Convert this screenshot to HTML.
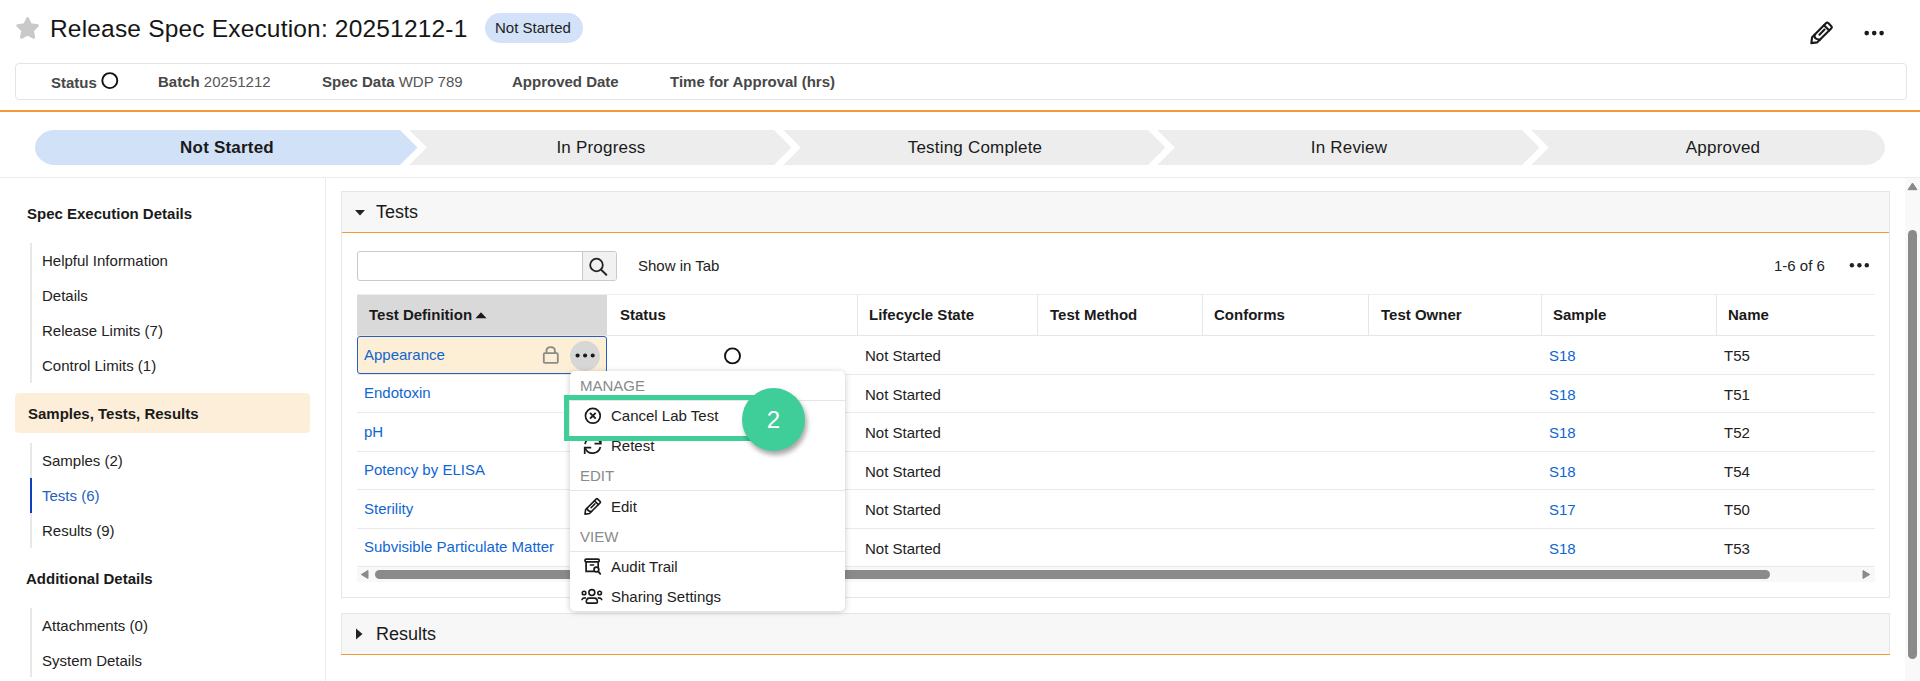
<!DOCTYPE html>
<html><head><meta charset="utf-8">
<style>
html,body{margin:0;padding:0;background:#fff;width:1920px;height:681px;overflow:hidden;position:relative;font-family:"Liberation Sans",sans-serif;}
.a{position:absolute;}
.t{position:absolute;white-space:nowrap;line-height:1;font-size:15px;color:#222;}
.b{font-weight:bold;}
.lnk{color:#0f66d2;}
svg{position:absolute;overflow:visible;}
</style></head><body>

<!-- ===== HEADER ===== -->
<svg style="left:0;top:0" width="60" height="50" viewBox="0 0 60 50"><path d="M27.60 18.30 L30.72 24.61 L37.68 25.62 L32.64 30.54 L33.83 37.48 L27.60 34.20 L21.37 37.48 L22.56 30.54 L17.52 25.62 L24.48 24.61 Z" fill="#c9c9c9" stroke="#c9c9c9" stroke-width="2.6" stroke-linejoin="round"/></svg>
<div class="t" style="left:50px;top:17px;font-size:24.5px;letter-spacing:0.18px;color:#161616;">Release Spec Execution: 20251212-1</div>
<div class="a" style="left:485px;top:13px;width:98px;height:30px;border-radius:15px;background:#d3e2f8;"></div>
<div class="t" style="left:495px;top:20px;color:#222;">Not Started</div>

<!-- pencil -->
<svg style="left:1802.1px;top:15.1px" width="32" height="32" viewBox="0 0 24 24"><g fill="none" stroke="#1a1a1a" stroke-width="1.6" stroke-linejoin="round" stroke-linecap="round"><path d="M7.00 21.10 L7.60 16.61 L18.14 6.07 Q18.91 5.30 19.69 6.07 L22.03 8.41 Q22.80 9.19 22.03 9.96 L11.49 20.50 Z"/><path d="M16.51 7.70 L20.40 11.59"/><path d="M13.08 14.74 L16.90 10.92"/><path d="M9.44 14.77 Q9.05 16.93 10.54 17.71 Q12.09 18.55 13.54 18.45"/></g></svg>
<!-- ellipsis -->
<svg style="left:1860px;top:28px" width="28" height="10" viewBox="0 0 28 10">
  <circle cx="6.7" cy="5.1" r="2.3" fill="#1a1a1a"/><circle cx="14.2" cy="5.1" r="2.3" fill="#1a1a1a"/><circle cx="21.6" cy="5.1" r="2.3" fill="#1a1a1a"/>
</svg>

<!-- ===== INFO BAR ===== -->
<div class="a" style="left:15px;top:63px;width:1890px;height:35px;border:1px solid #e4e4e4;border-radius:4px;"></div>
<div class="t b" style="left:51px;top:75px;color:#474747;">Status</div>
<svg style="left:101px;top:72px" width="18" height="18" viewBox="0 0 18 18"><circle cx="8.8" cy="8.6" r="7.5" fill="none" stroke="#111" stroke-width="1.9"/></svg>
<div class="t" style="left:158px;top:74px;color:#555;"><span class="b" style="color:#474747">Batch</span> 20251212</div>
<div class="t" style="left:322px;top:74px;color:#555;"><span class="b" style="color:#474747">Spec Data</span> WDP 789</div>
<div class="t b" style="left:512px;top:74px;color:#474747;">Approved Date</div>
<div class="t b" style="left:670px;top:74px;color:#474747;">Time for Approval (hrs)</div>

<div class="a" style="left:0;top:110px;width:1920px;height:2px;background:#f39a36;"></div>

<!-- ===== STAGE PATH ===== -->
<svg style="left:0;top:130px" width="1920" height="35" viewBox="0 130 1920 35">
  <path d="M55 130 L400 130 L417.5 147.5 L400 165 L55 165 A20 17.5 0 0 1 35 147.5 A20 17.5 0 0 1 55 130 Z" fill="#d1e1f8"/>
  <path d="M409.3 130 L774 130 L791.5 147.5 L774 165 L409.3 165 L426.8 147.5 Z" fill="#ededed"/>
  <path d="M783.3 130 L1148 130 L1165.5 147.5 L1148 165 L783.3 165 L800.8 147.5 Z" fill="#ededed"/>
  <path d="M1157.3 130 L1522 130 L1539.5 147.5 L1522 165 L1157.3 165 L1174.8 147.5 Z" fill="#ededed"/>
  <path d="M1531.3 130 L1865 130 A20 17.5 0 0 1 1885 147.5 A20 17.5 0 0 1 1865 165 L1531.3 165 L1548.8 147.5 Z" fill="#ededed"/>
</svg>
<div class="t b" style="left:35px;width:384px;text-align:center;top:139px;font-size:17px;letter-spacing:0.2px;color:#1a1a1a;">Not Started</div>
<div class="t" style="left:409px;width:384px;text-align:center;top:139px;font-size:17px;letter-spacing:0.2px;color:#1a1a1a;">In Progress</div>
<div class="t" style="left:783px;width:384px;text-align:center;top:139px;font-size:17px;letter-spacing:0.2px;color:#1a1a1a;">Testing Complete</div>
<div class="t" style="left:1157px;width:384px;text-align:center;top:139px;font-size:17px;letter-spacing:0.2px;color:#1a1a1a;">In Review</div>
<div class="t" style="left:1531px;width:384px;text-align:center;top:139px;font-size:17px;letter-spacing:0.2px;color:#1a1a1a;">Approved</div>

<div class="a" style="left:0;top:177px;width:1920px;height:1px;background:#ebebeb;"></div>

<!-- ===== SIDEBAR ===== -->
<div class="a" style="left:325px;top:178px;width:1px;height:503px;background:#ececec;"></div>
<div class="t b" style="left:27px;top:206px;color:#1a1a1a;">Spec Execution Details</div>
<div class="a" style="left:30px;top:243px;width:2px;height:140px;background:#e8e8e8;"></div>
<div class="t" style="left:42px;top:253px;">Helpful Information</div>
<div class="t" style="left:42px;top:288px;">Details</div>
<div class="t" style="left:42px;top:323px;">Release Limits (7)</div>
<div class="t" style="left:42px;top:358px;">Control Limits (1)</div>

<div class="a" style="left:15px;top:393px;width:295px;height:40px;border-radius:4px;background:#fdeed9;"></div>
<div class="t b" style="left:28px;top:406px;color:#1a1a1a;">Samples, Tests, Results</div>
<div class="a" style="left:30px;top:443px;width:2px;height:105px;background:#e8e8e8;"></div>
<div class="a" style="left:30px;top:478px;width:2px;height:35px;background:#0d3fbf;"></div>
<div class="t" style="left:42px;top:453px;">Samples (2)</div>
<div class="t" style="left:42px;top:488px;color:#2461c2;">Tests (6)</div>
<div class="t" style="left:42px;top:523px;">Results (9)</div>

<div class="t b" style="left:26px;top:571px;color:#1a1a1a;">Additional Details</div>
<div class="a" style="left:30px;top:608px;width:2px;height:69px;background:#e8e8e8;"></div>
<div class="t" style="left:42px;top:618px;">Attachments (0)</div>
<div class="t" style="left:42px;top:653px;">System Details</div>

<!-- page scrollbar -->
<div class="a" style="left:1905px;top:178px;width:15px;height:503px;background:#f9f9f9;"></div>
<svg style="left:1907px;top:182px" width="11" height="9" viewBox="0 0 11 9"><path d="M5.5 1 L10 7.7 L1 7.7 Z" fill="#8a8a8a" stroke="#8a8a8a" stroke-width="1" stroke-linejoin="round"/></svg>
<div class="a" style="left:1908px;top:230px;width:9px;height:429px;border-radius:4.5px;background:#8a8a8a;"></div>
<!-- ===== TESTS PANEL ===== -->
<div class="a" style="left:341px;top:191px;width:1547px;height:405px;border:1px solid #e6e6e6;"></div>
<div class="a" style="left:342px;top:192px;width:1547px;height:40px;background:#f7f7f7;"></div>
<div class="a" style="left:342px;top:232px;width:1547px;height:1px;background:#f29a35;"></div>
<svg style="left:354px;top:209px" width="12" height="8" viewBox="0 0 12 8"><path d="M1 1 L11 1 L6 6.5 Z" fill="#222"/></svg>
<div class="t" style="left:376px;top:203px;font-size:18px;color:#1a1a1a;">Tests</div>

<!-- search -->
<div class="a" style="left:357px;top:251px;width:258px;height:28px;border:1px solid #c9c9c9;border-radius:3px;background:#fff;"></div>
<div class="a" style="left:582px;top:252px;width:33px;height:28px;border-left:1px solid #c9c9c9;background:#f1f1f1;border-radius:0 2px 2px 0;"></div>
<svg style="left:586px;top:255px" width="24" height="24" viewBox="0 0 24 24"><circle cx="10.5" cy="10" r="6.3" fill="none" stroke="#222" stroke-width="1.8"/><path d="M15 14.6 L20.3 19.8" stroke="#222" stroke-width="2" stroke-linecap="round"/></svg>
<div class="t" style="left:638px;top:258px;">Show in Tab</div>
<div class="t" style="left:1774px;top:258px;">1-6 of 6</div>
<svg style="left:1846px;top:260px" width="26" height="10" viewBox="0 0 26 10"><circle cx="5.9" cy="5.3" r="2.2" fill="#222"/><circle cx="13.4" cy="5.3" r="2.2" fill="#222"/><circle cx="20.8" cy="5.3" r="2.2" fill="#222"/></svg>

<!-- table header -->
<div class="a" style="left:357px;top:294px;width:1518px;height:1px;background:#eeeeee;"></div>
<div class="a" style="left:357px;top:295px;width:250px;height:40px;background:#d9d9d9;"></div>
<div class="a" style="left:357px;top:335px;width:1518px;height:1px;background:#e6e6e6;"></div>
<div class="a" style="left:857px;top:295px;width:1px;height:40px;background:#e6e6e6;"></div>
<div class="a" style="left:1037px;top:295px;width:1px;height:40px;background:#e6e6e6;"></div>
<div class="a" style="left:1202px;top:295px;width:1px;height:40px;background:#e6e6e6;"></div>
<div class="a" style="left:1368px;top:295px;width:1px;height:40px;background:#e6e6e6;"></div>
<div class="a" style="left:1541px;top:295px;width:1px;height:40px;background:#e6e6e6;"></div>
<div class="a" style="left:1716px;top:295px;width:1px;height:40px;background:#e6e6e6;"></div>
<div class="t b" style="left:369px;top:307px;color:#1a1a1a;">Test Definition</div>
<svg style="left:474px;top:311px" width="14" height="9" viewBox="0 0 14 9"><path d="M1.5 7.2 L7 1.2 L12.5 7.2 Z" fill="#1a1a1a"/></svg>
<div class="t b" style="left:620px;top:307px;color:#1a1a1a;">Status</div>
<div class="t b" style="left:869px;top:307px;color:#1a1a1a;">Lifecycle State</div>
<div class="t b" style="left:1050px;top:307px;color:#1a1a1a;">Test Method</div>
<div class="t b" style="left:1214px;top:307px;color:#1a1a1a;">Conforms</div>
<div class="t b" style="left:1381px;top:307px;color:#1a1a1a;">Test Owner</div>
<div class="t b" style="left:1553px;top:307px;color:#1a1a1a;">Sample</div>
<div class="t b" style="left:1728px;top:307px;color:#1a1a1a;">Name</div>

<!-- row lines -->
<div class="a" style="left:357px;top:374px;width:1518px;height:1px;background:#e9e9e9;"></div>
<div class="a" style="left:357px;top:412px;width:1518px;height:1px;background:#e9e9e9;"></div>
<div class="a" style="left:357px;top:451px;width:1518px;height:1px;background:#e9e9e9;"></div>
<div class="a" style="left:357px;top:489px;width:1518px;height:1px;background:#e9e9e9;"></div>
<div class="a" style="left:357px;top:528px;width:1518px;height:1px;background:#e9e9e9;"></div>
<div class="a" style="left:357px;top:566px;width:1518px;height:1px;background:#e9e9e9;"></div>

<!-- selected cell -->
<div class="a" style="left:357px;top:336px;width:248px;height:36px;border:1px solid #2660c6;border-radius:3px;background:#fdeed6;"></div>
<svg style="left:541px;top:345px" width="20" height="20" viewBox="0 0 20 20"><g fill="none" stroke="#8a8a8a" stroke-width="1.8"><path d="M5.5 8 L5.5 5.8 Q5.5 2.2 9.7 2.2 Q13.9 2.2 13.9 5.8 L13.9 8"/><rect x="2.8" y="8.2" width="14" height="9.6" rx="1"/></g></svg>
<div class="a" style="left:570px;top:341px;width:30px;height:30px;border-radius:15px;background:#d7d7d7;"></div>
<svg style="left:570px;top:341px" width="30" height="30" viewBox="0 0 30 30"><circle cx="7.6" cy="14.5" r="2.05" fill="#1a1a1a"/><circle cx="15.1" cy="14.5" r="2.05" fill="#1a1a1a"/><circle cx="22.7" cy="14.5" r="2.05" fill="#1a1a1a"/></svg>

<!-- rows -->
<div class="t lnk" style="left:364px;top:347px;">Appearance</div>
<div class="t lnk" style="left:364px;top:385px;">Endotoxin</div>
<div class="t lnk" style="left:364px;top:424px;">pH</div>
<div class="t lnk" style="left:364px;top:462px;">Potency by ELISA</div>
<div class="t lnk" style="left:364px;top:501px;">Sterility</div>
<div class="t lnk" style="left:364px;top:539px;">Subvisible Particulate Matter</div>

<svg style="left:723px;top:346px" width="20" height="20" viewBox="0 0 20 20"><circle cx="9.5" cy="9.9" r="7.5" fill="none" stroke="#111" stroke-width="1.9"/></svg>

<div class="t" style="left:865px;top:348px;">Not Started</div>
<div class="t" style="left:865px;top:387px;">Not Started</div>
<div class="t" style="left:865px;top:425px;">Not Started</div>
<div class="t" style="left:865px;top:464px;">Not Started</div>
<div class="t" style="left:865px;top:502px;">Not Started</div>
<div class="t" style="left:865px;top:541px;">Not Started</div>

<div class="t lnk" style="left:1549px;top:348px;">S18</div>
<div class="t lnk" style="left:1549px;top:387px;">S18</div>
<div class="t lnk" style="left:1549px;top:425px;">S18</div>
<div class="t lnk" style="left:1549px;top:464px;">S18</div>
<div class="t lnk" style="left:1549px;top:502px;">S17</div>
<div class="t lnk" style="left:1549px;top:541px;">S18</div>

<div class="t" style="left:1724px;top:348px;">T55</div>
<div class="t" style="left:1724px;top:387px;">T51</div>
<div class="t" style="left:1724px;top:425px;">T52</div>
<div class="t" style="left:1724px;top:464px;">T54</div>
<div class="t" style="left:1724px;top:502px;">T50</div>
<div class="t" style="left:1724px;top:541px;">T53</div>

<!-- h scrollbar -->
<div class="a" style="left:357px;top:567px;width:1518px;height:15px;background:#f8f8f8;"></div>
<svg style="left:359px;top:569px" width="12" height="11" viewBox="0 0 12 11"><path d="M2.3 5.5 L9 1.5 L9 9.5 Z" fill="#8a8a8a" stroke="#8a8a8a" stroke-linejoin="round"/></svg>
<div class="a" style="left:375px;top:570px;width:1395px;height:9px;border-radius:4.5px;background:#8a8a8a;"></div>
<svg style="left:1860px;top:569px" width="12" height="11" viewBox="0 0 12 11"><path d="M9.7 5.5 L3 1.5 L3 9.5 Z" fill="#8a8a8a" stroke="#8a8a8a" stroke-linejoin="round"/></svg>

<!-- ===== RESULTS PANEL ===== -->
<div class="a" style="left:341px;top:613px;width:1547px;height:40px;border:1px solid #e6e6e6;border-bottom:none;background:#f7f7f7;"></div>
<div class="a" style="left:341px;top:654px;width:1549px;height:1px;background:#f29a35;"></div>
<svg style="left:354px;top:627px" width="10" height="14" viewBox="0 0 10 14"><path d="M2 1.5 L8.5 7 L2 12.5 Z" fill="#222"/></svg>
<div class="t" style="left:376px;top:625px;font-size:18px;color:#1a1a1a;">Results</div>
<!-- ===== CONTEXT MENU ===== -->
<div class="a" style="left:570px;top:371px;width:275px;height:240px;border-radius:5px;background:#fff;box-shadow:0 1px 6px rgba(0,0,0,0.22);"></div>
<div class="t" style="left:580px;top:378px;color:#8a8a8a;">MANAGE</div>
<div class="a" style="left:570px;top:400px;width:275px;height:1px;background:#e6e6e6;"></div>
<svg style="left:578px;top:400px" width="30" height="30" viewBox="0 0 30 30"><g fill="none" stroke="#1a1a1a"><circle cx="14.85" cy="15.8" r="7.4" stroke-width="1.7"/><path d="M12 12.95 L17.7 18.65 M17.7 12.95 L12 18.65" stroke-width="1.9"/></g></svg>
<div class="t" style="left:611px;top:408px;">Cancel Lab Test</div>
<svg style="left:578px;top:430px" width="30" height="30" viewBox="0 0 30 30"><g fill="none" stroke="#1a1a1a" stroke-width="1.7"><path d="M7 14.2 A8 8 0 0 1 22.3 12.6"/><path d="M16.5 13.7 L22.8 13.7 L22.8 7.5"/><path d="M22.4 17 A8 8 0 0 1 7.3 18.3"/><path d="M13.2 17.6 L6.7 17.6 L6.7 23.9"/></g></svg>
<div class="t" style="left:611px;top:438px;">Retest</div>
<div class="t" style="left:580px;top:468px;color:#8a8a8a;">EDIT</div>
<div class="a" style="left:570px;top:490px;width:275px;height:1px;background:#e6e6e6;"></div>
<svg style="left:578px;top:493px" width="24" height="24" viewBox="0 0 24 24"><g fill="none" stroke="#1a1a1a" stroke-width="1.6" stroke-linejoin="round" stroke-linecap="round"><path d="M7.00 21.10 L7.60 16.61 L18.14 6.07 Q18.91 5.30 19.69 6.07 L22.03 8.41 Q22.80 9.19 22.03 9.96 L11.49 20.50 Z"/><path d="M16.51 7.70 L20.40 11.59"/><path d="M13.08 14.74 L16.90 10.92"/><path d="M9.44 14.77 Q9.05 16.93 10.54 17.71 Q12.09 18.55 13.54 18.45"/></g></svg>
<div class="t" style="left:611px;top:499px;">Edit</div>
<div class="t" style="left:580px;top:529px;color:#8a8a8a;">VIEW</div>
<div class="a" style="left:570px;top:551px;width:275px;height:1px;background:#e6e6e6;"></div>
<svg style="left:578px;top:553px" width="30" height="30" viewBox="0 0 30 30"><g fill="none" stroke="#1a1a1a" stroke-width="1.7" stroke-linecap="round"><rect x="7" y="6.1" width="14.2" height="2.8" rx="1.2"/><path d="M8.1 9 L8.1 18.3 L16 18.3"/><path d="M20.2 9 L20.2 13.6"/><path d="M12.4 11.9 L15.6 11.9" stroke-width="1.5"/><circle cx="18.4" cy="16.5" r="2.4"/><path d="M20.3 18.6 L22.3 20.8" stroke-width="1.8"/></g></svg>
<div class="t" style="left:611px;top:559px;">Audit Trail</div>
<svg style="left:577px;top:583px" width="30" height="30" viewBox="0 0 30 30"><g fill="none" stroke="#1a1a1a" stroke-width="1.6" stroke-linecap="round"><circle cx="14.85" cy="9.6" r="2.95"/><path d="M9.3 18.6 Q9.3 15.3 12.2 15.1 L17.5 15.1 Q20.4 15.3 20.4 18.6 L20.4 19 Q20.4 20.1 19.3 20.1 L10.4 20.1 Q9.3 20.1 9.3 19 Z"/><circle cx="7.05" cy="10" r="1.8"/><circle cx="22.65" cy="10" r="1.8"/><path d="M5 16.6 Q5.6 14.9 8.3 14.9"/><path d="M24.7 16.6 Q24.1 14.9 21.4 14.9"/></g></svg>
<div class="t" style="left:611px;top:589px;">Sharing Settings</div>

<!-- ===== ANNOTATION ===== -->
<div class="a" style="left:564px;top:395px;width:190px;height:36px;border:5px solid #3fcd98;"></div>
<div class="a" style="left:742px;top:388px;width:63px;height:63px;border-radius:50%;background:#3fce99;box-shadow:2px 4px 5px rgba(0,0,0,0.35);"></div>
<div class="t" style="left:742px;width:63px;text-align:center;top:408px;font-size:24px;color:#fff;">2</div>
</body></html>
